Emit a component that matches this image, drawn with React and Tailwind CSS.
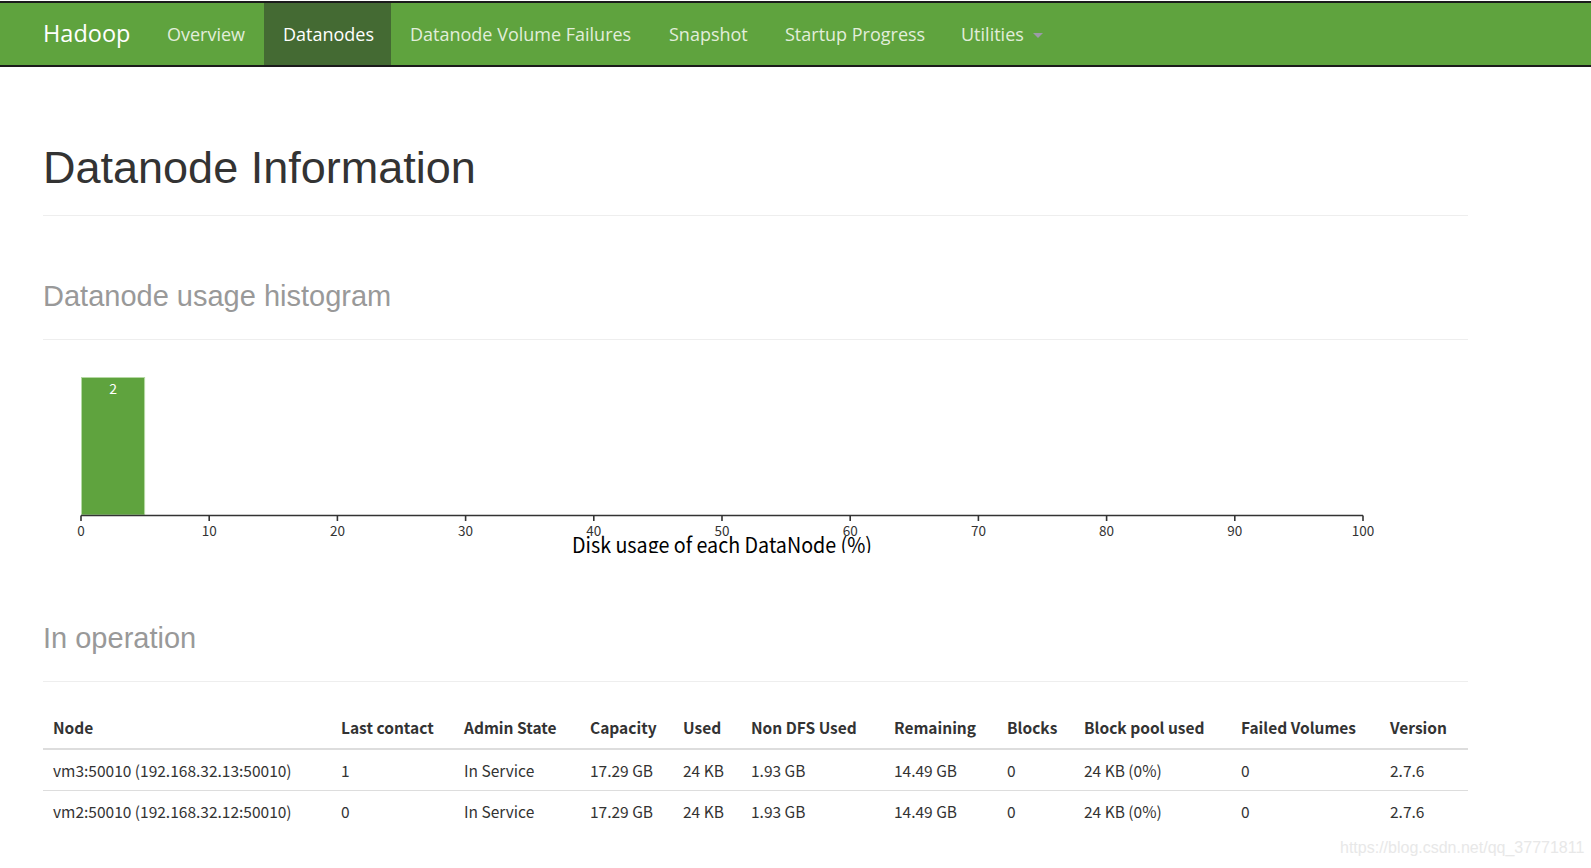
import React from "react";

const navItems = [
  { label: "Overview", w: "w-[116px]" },
  { label: "Datanodes", w: "w-[127px]", active: true },
  { label: "Datanode Volume Failures", w: "w-[259px]" },
  { label: "Snapshot", w: "w-[116px]" },
  { label: "Startup Progress", w: "w-[176px]" },
];

const cols = [
  "Node",
  "Last contact",
  "Admin State",
  "Capacity",
  "Used",
  "Non DFS Used",
  "Remaining",
  "Blocks",
  "Block pool used",
  "Failed Volumes",
  "Version",
];

const rows = [
  ["vm3:50010 (192.168.32.13:50010)", "1", "In Service", "17.29 GB", "24 KB", "1.93 GB", "14.49 GB", "0", "24 KB (0%)", "0", "2.7.6"],
  ["vm2:50010 (192.168.32.12:50010)", "0", "In Service", "17.29 GB", "24 KB", "1.93 GB", "14.49 GB", "0", "24 KB (0%)", "0", "2.7.6"],
];

const gridCols =
  "grid grid-cols-[288px_123px_126px_93px_68px_143px_113px_77px_157px_149px_88px]";

function Histogram() {
  const x0 = 38;
  const unit = 12.82;
  const axisY = 175.5;
  const ticks = [0, 10, 20, 30, 40, 50, 60, 70, 80, 90, 100];
  return (
    <svg width="1425" height="213" className="block">
      <rect
        x={x0 + 0.5}
        y={37.5}
        width={unit * 5 - 1}
        height={axisY - 38}
        fill="#5fa33e"
        stroke="#b5d9a3"
        strokeWidth="1"
      />
      <text
        x={x0 + (unit * 5) / 2}
        y={54}
        fill="#ffffff"
        fontSize="14"
        textAnchor="middle"
        fontFamily="'Noto Sans CJK SC', 'Open Sans', sans-serif"
      >
        2
      </text>
      <line x1={x0} y1={axisY} x2={x0 + unit * 100} y2={axisY} stroke="#333" strokeWidth="1.6" />
      {ticks.map((t) => (
        <g key={t}>
          <line
            x1={x0 + unit * t}
            y1={axisY}
            x2={x0 + unit * t}
            y2={axisY + 5.5}
            stroke="#333"
            strokeWidth="1.6"
          />
          <text
            x={x0 + unit * t}
            y={196}
            fill="#333"
            fontSize="13.5"
            textAnchor="middle"
            fontFamily="'Noto Sans CJK SC', sans-serif"
          >
            {t}
          </text>
        </g>
      ))}
      <text
        x={529}
        y={212.5}
        fill="#000"
        fontSize="21"
        textLength="300"
        lengthAdjust="spacingAndGlyphs"
        fontFamily="'Noto Sans CJK SC', sans-serif"
      >
        Disk usage of each DataNode (%)
      </text>
    </svg>
  );
}

export default function App() {
  return (
    <div className="relative min-h-[868px] overflow-hidden bg-white">
      <div className="pt-px">
        <div className="flex h-[66px] items-center border-y-2 border-y-[#1b1b1b] bg-[#5fa33e] font-['Open_Sans',sans-serif]">
          <div className="flex h-full w-[148px] items-center pl-[43px] text-[23.5px] text-white">
            Hadoop
          </div>
          {navItems.map((it) => (
            <div
              key={it.label}
              className={
                "flex h-full items-center pl-[19px] text-[18px] " +
                it.w +
                (it.active ? " bg-[#446a33] text-white" : " text-[#e2eedb]")
              }
            >
              {it.label}
            </div>
          ))}
          <div className="flex h-full w-[118px] items-center pl-[19px] text-[18px] text-[#e2eedb]">
            Utilities
            <span className="ml-[9px] mt-[2px] h-0 w-0 border-x-[5px] border-t-[5px] border-x-transparent border-t-[#9c9aa8]" />
          </div>
        </div>
      </div>

      <div className="ml-[43px] w-[1425px] font-['Liberation_Sans',Arial,sans-serif]">
        <div className="border-b border-[#eee] pb-[22px] pt-[76px]">
          <h1 className="text-[45px] leading-[49.5px] text-[#333]">Datanode Information</h1>
        </div>

        <div className="mt-[64px] border-b border-[#eee] pb-[27px]">
          <h2 className="text-[29px] leading-[32px] text-[#999]">Datanode usage histogram</h2>
        </div>

        <Histogram />

        <div className="mt-[69px] border-b border-[#eee] pb-[27px]">
          <h2 className="text-[29px] leading-[32px] text-[#999]">In operation</h2>
        </div>

        <div className="mt-[24px] font-['Noto_Sans_CJK_SC','Open_Sans',sans-serif] text-[15.5px] text-[#333]">
          <div className={gridCols + " h-[44px] items-center border-b-2 border-[#ddd] pt-[2px] font-bold"}>
            {cols.map((c) => (
              <div key={c} className="whitespace-nowrap px-[10px]">
                {c}
              </div>
            ))}
          </div>
          {rows.map((r, i) => (
            <div
              key={i}
              className={
                gridCols +
                " items-center pt-[2px] " +
                (i === 0 ? "h-[41px] border-b border-[#ddd]" : "h-[41px]")
              }
            >
              {r.map((c, j) => (
                <div key={j} className="whitespace-nowrap px-[10px]">
                  {c}
                </div>
              ))}
            </div>
          ))}
        </div>
      </div>

      <div className="absolute left-[1340px] top-[838px] font-['Liberation_Sans',Arial,sans-serif] text-[16px] leading-[20px] text-[#e8e8e8]">
        https://blog.csdn.net/qq_37771811
      </div>
    </div>
  );
}
